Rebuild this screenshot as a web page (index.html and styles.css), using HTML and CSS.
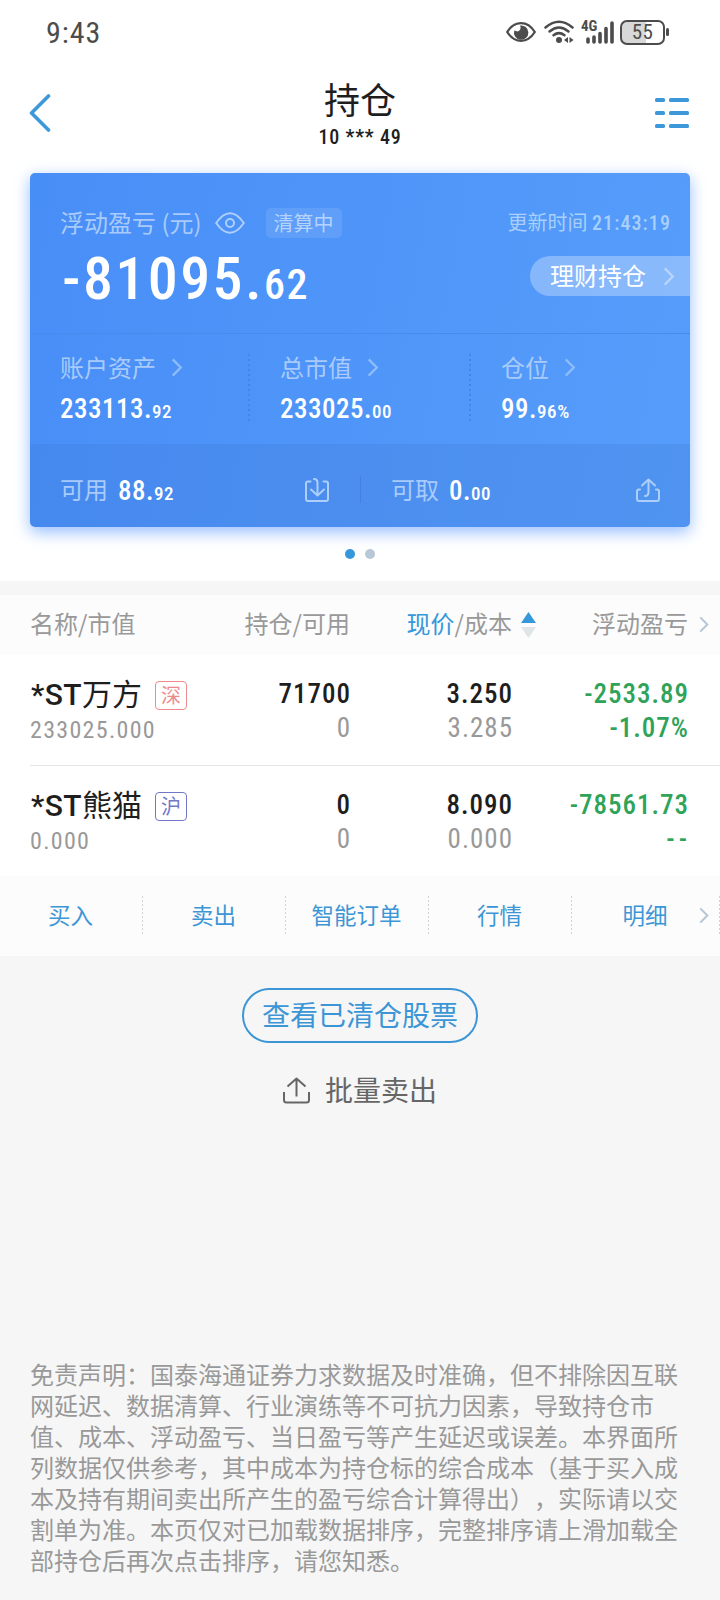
FILE: index.html
```html
<!DOCTYPE html>
<html lang="zh-CN">
<head>
<meta charset="utf-8">
<title>持仓</title>
<link rel="stylesheet" href="styles.css">
</head>
<body>
<svg class="defs" aria-hidden="true">
  <symbol id="chev" viewBox="0 0 12 20"><path d="M1.5 1.5 10 10 1.5 18.5" fill="none" stroke="currentColor" stroke-width="2.4"/></symbol>
</svg>
<div class="status">
  <span class="time num">9:43</span>
  <div class="sys">
    <svg width="30" height="20" viewBox="0 0 30 20"><path d="M1.2 10C5 4 9.500 1.200 15 1.200S25 4 28.800 10C25 16 20.500 18.800 15 18.800S5 16 1.200 10Z" fill="none" stroke="#4c4c4c" stroke-width="2.300"/><path d="M14 3.500A4 4 0 0 1 11.500 9.500L8.300 8.500A7.200 7.200 0 1 0 14 3.500Z" fill="#4c4c4c"/></svg>
    <svg class="wifi" width="30" height="24" viewBox="0 0 30 24"><g fill="none" stroke="#4c4c4c" stroke-width="2.500" stroke-linecap="round"><path d="M1.500 7.500Q15-4 28.500 7.500"/><path d="M5.500 11.500Q15 3.500 24.500 11.500"/><path d="M9.500 15.300Q15 11 20.500 15.300"/></g><circle cx="15" cy="20" r="3" fill="#4c4c4c"/><path d="M20 20l4-3v6zM29.500 20l-4-3v6z" fill="#4c4c4c"/></svg>
    <div class="signal"><span class="net num">4G</span><svg width="28" height="23" viewBox="0 0 28 23"><g stroke="#4c4c4c" stroke-width="3.600" stroke-linecap="round"><path d="M2 18v3M8 16v5M14 12.500v8.500M20 7.500V21M26 2v19"/></g></svg></div>
    <div class="batt"><span class="num">55</span></div><i class="cap"></i>
  </div>
</div>
<header class="nav">
  <svg class="back" width="22" height="38" viewBox="0 0 22 38"><path d="M19.500 2 2.500 19l17 17" fill="none" stroke="#3d98da" stroke-width="3.600" stroke-linecap="round" stroke-linejoin="round"/></svg>
  <div class="heading"><h1>持仓</h1><span class="acct num">10 *** 49</span></div>
  <svg class="menu" width="34" height="31" viewBox="0 0 34 31" fill="#3d98da"><rect width="10" height="4" rx="1.500"/><rect x="14" width="20" height="4" rx="1.500"/><rect y="13" width="10" height="4" rx="1.500"/><rect x="14" y="13" width="20" height="4" rx="1.500"/><rect y="26" width="10" height="4" rx="1.500"/><rect x="14" y="26" width="20" height="4" rx="1.500"/></svg>
</header>
<div class="deck">
<section class="card">
  <div class="top">
    <div class="line1">
      <span class="dim">浮动盈亏 (元)</span>
      <svg class="eye" width="30" height="22" viewBox="0 0 30 22" fill="none" stroke="#aecffc" stroke-width="2"><path d="M1.200 11C6 4 10 1.200 15 1.200S24 4 28.800 11C24 18 20 20.800 15 20.800S6 18 1.200 11Z"/><circle cx="15" cy="11" r="4"/></svg>
      <span class="tag">清算中</span>
      <span class="upd">更新时间 <b class="num">21:43:19</b></span>
    </div>
    <div class="line2">
      <div class="total num">-81095.<small>62</small></div>
      <div class="pill"><span>理财持仓</span><svg width="12" height="19"><use href="#chev"/></svg></div>
    </div>
  </div>
  <div class="stats">
    <div class="stat s1"><div class="lab">账户资产<svg width="12" height="19"><use href="#chev"/></svg></div><div class="val num">233113.<small>92</small></div></div>
    <div class="stat s2"><div class="lab">总市值<svg width="12" height="19"><use href="#chev"/></svg></div><div class="val num">233025.<small>00</small></div></div>
    <div class="stat s3"><div class="lab">仓位<svg width="12" height="19"><use href="#chev"/></svg></div><div class="val num">99.<small>96%</small></div></div>
  </div>
  <div class="cash">
    <div class="half"><span class="dim">可用</span><span class="val num">88.<small>92</small></span>
      <svg width="24" height="24" viewBox="0 0 24 24" fill="none" stroke="#aecffc" stroke-width="2" stroke-linecap="round" stroke-linejoin="round"><path d="M5.500 3.500H3q-2 0-2 2V21q0 2 2 2h18q2 0 2-2V5.500q0-2-2-2h-2.500"/><path d="M9 1q3.500 0 3.500 4v12M6 11.500l6.500 6 6.500-6"/></svg></div>
    <div class="half right"><span class="dim">可取</span><span class="val num">0.<small>00</small></span>
      <svg width="24" height="24" viewBox="0 0 24 24" fill="none" stroke="#aecffc" stroke-width="2" stroke-linecap="round" stroke-linejoin="round"><path d="M4 11.500H3q-2 0-2 2V21q0 2 2 2h18q2 0 2-2v-7.500q0-2-2-2h-1"/><path d="M9 18q3.500 0 3.500-4V1.500M6 7.500l6.500-6 6.500 6"/></svg></div>
  </div>
</section>
<div class="dots"><i class="on"></i><i></i></div>
</div>
<section class="table">
  <div class="row thead">
    <span>名称/市值</span><span>持仓/可用</span><span><em>现价</em>/成本</span>
    <svg class="sort" width="15" height="26" viewBox="0 0 15 26"><path d="M7.500 0 15 11H0z" fill="#3598db"/><path d="M0 15h15l-7.500 11z" fill="#dfe4e6"/></svg>
    <span>浮动盈亏</span><svg class="more" width="10" height="17"><use href="#chev"/></svg>
  </div>
  <div class="row item">
    <div class="name"><div class="nm"><b class="num">*ST</b><span>万方</span><i class="mk sz">深</i></div><div class="sub num">233025.000</div></div>
    <div class="fig num"><p>71700</p><p class="g">0</p></div>
    <div class="fig num"><p>3.250</p><p class="g">3.285</p></div>
    <div class="fig num loss"><p>-2533.89</p><p>-1.07%</p></div>
  </div>
  <div class="row item last">
    <div class="name"><div class="nm"><b class="num">*ST</b><span>熊猫</span><i class="mk sh">沪</i></div><div class="sub num">0.000</div></div>
    <div class="fig num"><p>0</p><p class="g">0</p></div>
    <div class="fig num"><p>8.090</p><p class="g">0.000</p></div>
    <div class="fig num loss"><p>-78561.73</p><p class="dash">--</p></div>
  </div>
  <nav class="tabs">
    <a>买入</a><a>卖出</a><a>智能订单</a><a>行情</a><a>明细<svg class="more" width="10" height="17"><use href="#chev"/></svg></a>
  </nav>
</section>
<a class="cleared">查看已清仓股票</a>
<a class="batch"><svg width="27" height="27" viewBox="0 0 27 27" fill="none" stroke="#666" stroke-width="2" stroke-linejoin="round"><path d="M1 15v8q0 2.500 2.500 2.500h20Q26 25.500 26 23v-8M13.500 19.500V2M4.500 9.500l9-8 9 8"/></svg><span>批量卖出</span></a>
<p class="legal">免责声明：国泰海通证券力求数据及时准确，但不排除因互联<br>网延迟、数据清算、行业演练等不可抗力因素，导致持仓市<br>值、成本、浮动盈亏、当日盈亏等产生延迟或误差。本界面所<br>列数据仅供参考，其中成本为持仓标的综合成本（基于买入成<br>本及持有期间卖出所产生的盈亏综合计算得出），实际请以交<br>割单为准。本页仅对已加载数据排序，完整排序请上滑加载全<br>部持仓后再次点击排序，请您知悉。</p>
</body>
</html>
```
FILE: styles.css
```css
* { box-sizing: border-box; }
body {
  margin: 0; width: 720px; height: 1600px; overflow: hidden;
  background: #f6f6f6; color: #1e1e1e;
  font-family: "Noto Sans CJK SC", sans-serif; font-size: 24px;
  text-spacing-trim: space-all;
}
svg { display: block; flex: none; }
p { margin: 0; }
i, em, b { font-style: normal; }
.defs { position: absolute; width: 0; height: 0; }
.num { font-family: Roboto, "Noto Sans", sans-serif; font-weight: 500; font-stretch: 85%; }
.dim { color: #a9cbfb; }

.status { height: 65px; background: #fff; display: flex; justify-content: space-between; padding: 0 51px 0 46px; }
.time { font-size: 30px; font-weight: 400; line-height: 65px; letter-spacing: 1px; color: #4c4c4c; }
.sys { display: flex; align-items: center; height: 64px; }
.wifi { margin-left: 8px; }
.signal { display: flex; margin-left: 7px; width: 33px; height: 23px; justify-content: flex-end; position: relative; }
.net { position: absolute; left: 0; top: -2px; font-size: 15px; line-height: 15px; color: #4c4c4c; font-weight: 700; }
.batt { margin-left: 6px; width: 45px; height: 25px; border: 2px solid #4c4c4c; border-radius: 7px; background: linear-gradient(90deg, #d8d8d8 58%, #fff 58%); display: flex; align-items: center; justify-content: center; font-size: 21px; color: #4c4c4c; letter-spacing: .5px; }
.batt .num { font-weight: 400; }
.cap { width: 3px; height: 8px; margin-left: 1px; border-radius: 2px; background: #4c4c4c; }

.nav { height: 108px; background: #fff; display: flex; justify-content: space-between; padding: 0 31px 0 29px; }
.back { margin-top: 29px; }
.menu { margin-top: 33px; }
.heading { display: flex; flex-direction: column; align-items: center; padding-left: 14px; }
.heading h1 { margin: 11px 0 0; font-size: 36px; font-weight: 400; line-height: 44px; }
.acct { font-size: 20px; font-weight: 500; line-height: 26px; letter-spacing: .8px; margin-top: 4px; }

.deck { height: 408px; padding: 0 30px; background: #fff; }
.card {
  height: 354px; border-radius: 5px; overflow: hidden;
  background: linear-gradient(100deg, #488ef7, #569dfb);
  box-shadow: 0 5px 16px rgba(77, 145, 255, .6);
}
.top { height: 161px; border-bottom: 1px solid #488bea; padding: 33px 0 0 30px; }
.line1 { display: flex; align-items: center; height: 34px; line-height: 30px; }
.line1 .dim, .upd { height: 32px; }
.eye { margin-left: 13px; }
.tag { margin-left: 21px; width: 76px; height: 30px; border-radius: 5px; background: rgba(255,255,255,.1); color: #b4d3fd; font-size: 20px; line-height: 29px; text-align: center; }
.upd { margin-left: auto; margin-right: 19px; font-size: 20px; color: #a9cffb; }
.upd b { font-weight: 500; font-size: 20px; letter-spacing: 1.100px; }
.line2 { display: flex; justify-content: space-between; }
.total { color: #fff; font-size: 60px; line-height: 78px; letter-spacing: 2.400px; padding-left: 2px; }
.total small { font-size: 42px; letter-spacing: 1.500px; }
.pill { margin-top: 16px; width: 160px; height: 40px; border-radius: 20px 0 0 20px; background: rgba(255,255,255,.3); color: #fff; display: flex; align-items: center; padding-left: 20px; }
.pill span { line-height: 36px; height: 38px; }
.pill svg { margin-left: 17px; color: #b9d5fd; }
.stats { height: 110px; display: flex; }
.stat { padding: 17px 0 0 30px; position: relative; }
.s1 { width: 220px; } .s2 { width: 221px; } .s3 { width: 219px; }
.s1::after, .s2::after { content: ""; position: absolute; right: 0; top: 20px; width: 2px; height: 68px; background: repeating-linear-gradient(#4285e4 0 2px, transparent 2px 5px); }
.lab { display: flex; align-items: center; height: 32px; color: #a9cbfb; line-height: 32px; }
.lab svg { margin-left: 15px; color: #8fbcfb; }
.val { color: #fff; font-size: 27px; letter-spacing: .5px; line-height: 32px; margin-top: 10px; }
.val small { font-size: 19px; letter-spacing: .6px; }
.cash { height: 83px; background: rgba(65,120,210,.25); display: flex; align-items: center; padding-top: 8px; }
.half { display: flex; align-items: center; width: 330px; padding: 0 30px 0 30px; height: 27px; }
.half.right { border-left: 1px solid #4380e0; padding-left: 30px; }
.half .dim { line-height: 26px; height: 28px; }
.half .val { margin: 5px 0 0 10px; }
.half svg { margin-left: auto; }
.half:first-child svg { margin-right: 1px; }

.dots { display: flex; justify-content: center; gap: 10px; padding-top: 22px; }
.dots i { width: 10px; height: 10px; border-radius: 5px; background: #b9c8d6; }
.dots .on { background: #3598db; }

.table { margin-top: 14px; }
.row { display: grid; grid-template-columns: 181px 139px 162px 176px; padding-left: 30px; }
.thead { height: 60px; background: #fcfcfc; color: #999; line-height: 56px; grid-template-columns: 181px 139px 162px 24px 152px 1fr; }
.thead span:not(:first-child) { text-align: right; }
.thead em { color: #3598db; }
.sort { margin: 17px 0 0 9px; }
.more { color: #b7c6d6; }
.thead .more { margin: 21px 0 0 11px; }
.item { height: 111px; background: #fff; position: relative; padding-top: 22px; }
.item:not(.last)::after { content: ""; position: absolute; left: 30px; right: 0; bottom: 0; height: 1px; background: #e5e5e5; }
.last { height: 110px; }
.nm { display: flex; align-items: center; height: 36px; font-size: 30px; line-height: 36px; white-space: nowrap; }
.nm b { font-size: 30px; font-stretch: 100%; letter-spacing: .4px; padding-left: 1px; }
.nm span { line-height: 31px; height: 36px; }
.mk { width: 32px; height: 29px; margin-left: 13px; border: 1px solid; border-radius: 4px; font-size: 20px; line-height: 26px; text-align: center; }
.sz { color: #ee8a8e; } .sh { color: #7377c8; }
.sub { font-size: 24px; font-weight: 400; line-height: 34px; color: #999; letter-spacing: 1.300px; }
.fig { text-align: right; font-size: 27px; line-height: 34px; letter-spacing: 1px; margin-right: -1px; }
.g { color: #999; font-weight: 400; }
.loss { color: #2fa359; }
.dash { letter-spacing: 4px; margin-right: -2px; }

.tabs { height: 80px; background: #fcfcfc; display: grid; grid-template-columns: repeat(4, 143px) 148px; align-items: center; padding-bottom: 2px; }
.tabs a { position: relative; height: 38px; line-height: 36px; font-size: 22.500px; text-align: center; color: #3c96d6; padding-right: 2px; }
.tabs a::after { content: ""; position: absolute; right: 0; top: 0; width: 1px; height: 38px; background: repeating-linear-gradient(#d2d2d2 0 2px, transparent 2px 4px); }
.tabs .more { position: absolute; right: 11px; top: 11px; }
.cleared { display: block; width: 236px; height: 55px; margin: 32px auto 0; border: 2px solid #3c96d6; border-radius: 28px; color: #3c96d6; font-size: 28px; line-height: 49px; text-align: center; }
.batch { display: flex; justify-content: center; align-items: center; gap: 15px; height: 40px; margin-top: 27px; font-size: 28px; color: #666; }
.batch span { line-height: 37px; height: 39px; }
.legal { margin: 248px 0 0 30px; font-size: 24px; line-height: 31px; color: #999; white-space: nowrap; }
```
